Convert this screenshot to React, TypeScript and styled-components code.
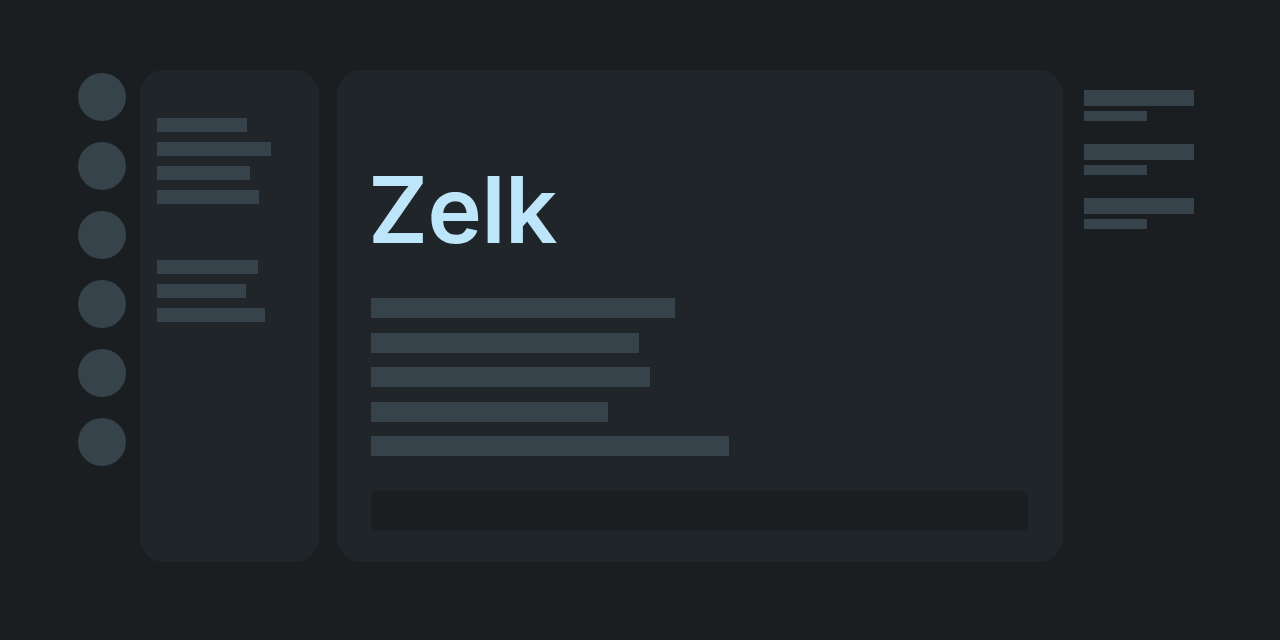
import React, { FC } from 'react';
import styled, { createGlobalStyle } from 'styled-components';

const GlobalStyle = createGlobalStyle`
  html, body {
    margin: 0;
    padding: 0;
    background: #1a1e21;
    font-family: Inter, 'Noto Sans', sans-serif;
  }
`;

const Layout = styled.div`
  display: flex;
  align-items: flex-start;
  width: 1280px;
  height: 640px;
  box-sizing: border-box;
  padding: 70px 0 0 78px;
  background: #1a1e21;
`;

const Rail = styled.div`
  display: flex;
  flex-direction: column;
  gap: 21px;
  margin-top: 3px;
  margin-right: 14px;
`;

const Avatar = styled.div`
  width: 48px;
  height: 48px;
  border-radius: 50%;
  background: #36434b;
`;

const Sidebar = styled.nav`
  display: flex;
  flex-direction: column;
  gap: 56px;
  width: 179px;
  height: 492px;
  box-sizing: border-box;
  padding: 48px 17px;
  margin-right: 18px;
  border-radius: 24px;
  background: #1f2528;
`;

const NavGroup = styled.div`
  display: flex;
  flex-direction: column;
  gap: 10px;
`;

const Bar = styled.div<{ w: number; h: number }>`
  width: ${({ w }) => w}px;
  height: ${({ h }) => h}px;
  background: #36434b;
`;

const Main = styled.main`
  display: flex;
  flex-direction: column;
  width: 726px;
  height: 492px;
  box-sizing: border-box;
  padding: 94px 35px 31px 34px;
  margin-right: 21px;
  border-radius: 24px;
  background: #1f2528;
`;

const Title = styled.h1`
  margin: 0 0 0 -3px;
  font-size: 92px;
  line-height: 1;
  font-weight: 600;
  color: #bee6fa;
  letter-spacing: -0.5px;
`;

const Lines = styled.div`
  display: flex;
  flex-direction: column;
  gap: 14.5px;
  margin-top: 42px;
`;

const Input = styled.div`
  margin-top: auto;
  height: 40px;
  border-radius: 6px;
  background: #1a1e21;
`;

const Aside = styled.aside`
  display: flex;
  flex-direction: column;
  gap: 23px;
  margin-top: 20px;
`;

const Meta = styled.div`
  display: flex;
  flex-direction: column;
  gap: 5px;
`;

const navGroups = [
  [90, 114, 93, 102],
  [101, 89, 108],
];

const lineWidths = [304, 268, 279, 237, 358];

const App: FC = () => (
  <>
    <GlobalStyle />
    <Layout>
      <Rail>
        {[0, 1, 2, 3, 4, 5].map((i) => (
          <Avatar key={i} />
        ))}
      </Rail>
      <Sidebar>
        {navGroups.map((group, gi) => (
          <NavGroup key={gi}>
            {group.map((w, i) => (
              <Bar key={i} w={w} h={14} />
            ))}
          </NavGroup>
        ))}
      </Sidebar>
      <Main>
        <Title>Zelk</Title>
        <Lines>
          {lineWidths.map((w, i) => (
            <Bar key={i} w={w} h={20} />
          ))}
        </Lines>
        <Input />
      </Main>
      <Aside>
        {[0, 1, 2].map((i) => (
          <Meta key={i}>
            <Bar w={110} h={16} />
            <Bar w={63} h={10} />
          </Meta>
        ))}
      </Aside>
    </Layout>
  </>
);

export default App;
